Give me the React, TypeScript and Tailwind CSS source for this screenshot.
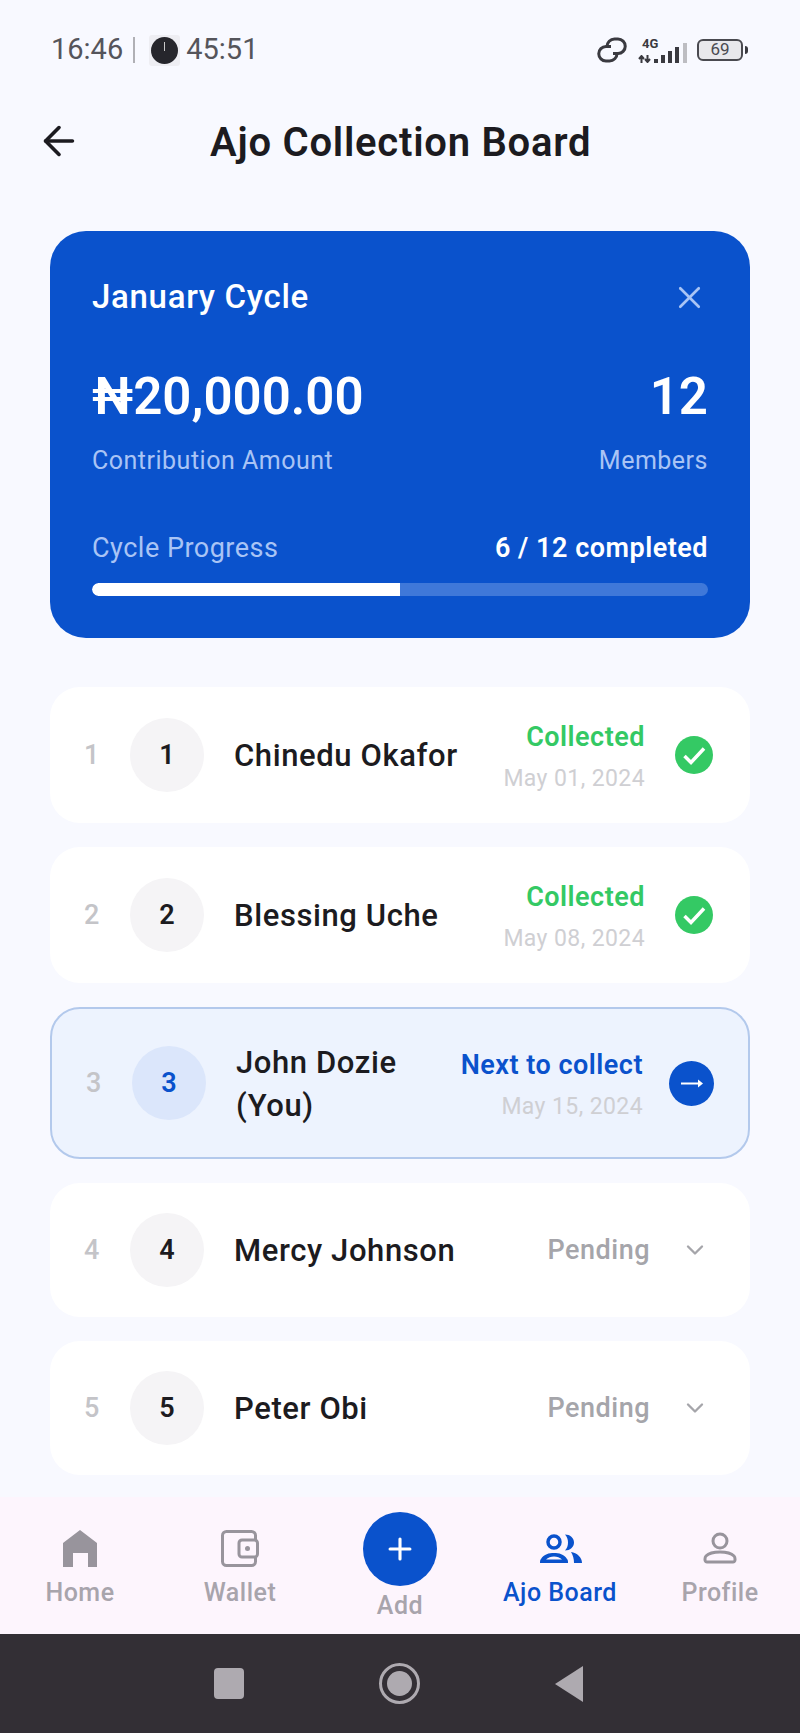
import { ReactNode } from "react";
import { ArrowLeft, ChevronDown, Plus, X } from "lucide-react";

const font = "font-['Roboto',sans-serif]";

function CheckIcon() {
  return (
    <svg width="38" height="38" viewBox="0 0 38 38">
      <circle cx="19" cy="19" r="19" fill="#34c964" />
      <path d="M9.5 20l6.5 6.5L29 12.5" fill="none" stroke="white" strokeWidth="3.5" />
    </svg>
  );
}

function ArrowIcon() {
  return (
    <svg width="45" height="45" viewBox="0 0 45 45">
      <circle cx="22.5" cy="22.5" r="22.5" fill="#0a52cc" />
      <path d="M12 22.5h20" stroke="white" strokeWidth="2" />
      <path d="M29 18.5l5 4-5 4z" fill="white" />
    </svg>
  );
}

function Avatar({ n, active }: { n: number; active?: boolean }) {
  return (
    <div className={`w-[74px] h-[74px] rounded-full flex items-center justify-center text-[27px] font-semibold ${active ? "bg-[#dbe6fb] text-[#0a52cc]" : "bg-[#f5f4f6] text-[#1c1b20]"}`}>
      {n}
    </div>
  );
}

function CollectedRow({ n, name, date }: { n: number; name: string; date: string }) {
  return (
    <div className="h-[136px] rounded-[30px] bg-white flex items-center pl-[34px] pr-[37px]">
      <span className="w-[46px] text-[27px] font-medium text-[#c4c4c8]">{n}</span>
      <Avatar n={n} />
      <span className="ml-[30px] mt-[3px] flex-1 text-[31px] tracking-[0.6px] font-medium text-[#1c1b20]">{name}</span>
      <div className="flex flex-col items-end mr-[30px] mt-[6px]">
        <span className="text-[27px] tracking-[0.5px] font-semibold text-[#34c964] leading-[36px]">Collected</span>
        <span className="text-[23px] tracking-[0.4px] text-[#cfcfd3] leading-[36px] mt-[6px]">{date}</span>
      </div>
      <CheckIcon />
    </div>
  );
}

function PendingRow({ n, name }: { n: number; name: string }) {
  return (
    <div className="h-[134px] rounded-[30px] bg-white flex items-center pl-[34px] pr-[41px]">
      <span className="w-[46px] text-[27px] font-medium text-[#c4c4c8]">{n}</span>
      <Avatar n={n} />
      <span className="ml-[30px] mt-[2px] flex-1 text-[31px] tracking-[0.6px] font-medium text-[#1c1b20]">{name}</span>
      <span className="text-[27px] tracking-[0.5px] font-medium text-[#a5a5aa] mr-[31px]">Pending</span>
      <ChevronDown size={28} color="#a5a5aa" />
    </div>
  );
}

function NavIcon({ label, active, children }: { label: string; active?: boolean; children: ReactNode }) {
  return (
    <div className="flex flex-col items-center w-[160px] pt-[28px]">
      <div className="h-[46px] flex items-center justify-center">{children}</div>
      <span className={`mt-[6px] text-[25px] tracking-[0.5px] leading-[32px] font-medium whitespace-nowrap ${active ? "text-[#0a52cc]" : "text-[#a8a4ac]"}`}>{label}</span>
    </div>
  );
}

export default function App() {
  return (
    <div className={`w-[800px] h-[1733px] bg-[#f8f9ff] flex flex-col overflow-hidden ${font}`}>
      <div className="h-[100px] flex items-center justify-between pl-[51px] pr-[52px] text-[#55555b]">
        <div className="flex items-center text-[29px]">
          <span>16:46</span>
          <span className="w-[2px] h-[26px] bg-[#b0b0b5] ml-[10px] mr-[14px]" />
          <div className="w-[31px] h-[31px] rounded-[3px] bg-[#eeeef3] flex items-center justify-center">
            <svg width="27" height="27" viewBox="0 0 27 27">
              <circle cx="13.5" cy="13.5" r="13.5" fill="#26262c" />
              <path d="M13.5 5v9" stroke="#c8c8c8" strokeWidth="1" />
            </svg>
          </div>
          <span className="ml-[6px]">45:51</span>
        </div>
        <div className="flex items-center gap-[10px]">
          <svg width="32" height="26" viewBox="0 0 32 26" fill="none" stroke="#3a3a40" strokeWidth="3">
            <path d="M15 9.5h-5a7 7 0 0 0 0 14.5h3.500a7.500 7.500 0 0 0 7.500-7.500" />
            <path d="M17 16.500h5a7 7 0 0 0 0-14.500h-3.500a7.500 7.500 0 0 0-7.500 7.500" />
          </svg>
          <div className="flex items-end gap-[3px]">
            <div className="flex flex-col">
              <span className="text-[13px] leading-[12px] font-bold ml-[4px] text-[#3a3a40]">4G</span>
              <div className="flex items-end gap-[3px] mt-[1px]">
                <svg width="13" height="8" viewBox="0 0 13 8" fill="none" stroke="#3a3a40" strokeWidth="2">
                  <path d="M3.5 8V2M1 4l2.5-3L6 4" />
                  <path d="M9.5 0v6M7 4l2.5 3L12 4" />
                </svg>
                <span className="w-[4px] h-[4px] bg-[#3a3a40]" />
                <span className="w-[4px] h-[8px] bg-[#3a3a40]" />
                <span className="w-[4px] h-[12px] bg-[#3a3a40]" />
              </div>
            </div>
            <span className="w-[4px] h-[16px] bg-[#3a3a40]" />
            <span className="w-[4px] h-[20px] bg-[#bdbdc2] ml-[1px]" />
          </div>
          <div className="flex items-center">
            <div className="w-[46px] h-[22px] rounded-[6px] border-2 border-[#4a4a50] flex items-center justify-center text-[17px] text-[#4a4a50] bg-[#e8e8ec]">69</div>
            <span className="w-[3px] h-[8px] bg-[#3a3a40] ml-[2px] rounded-r" />
          </div>
        </div>
      </div>

      <div className="h-[82px] flex items-center">
        <ArrowLeft size={46} strokeWidth={1.9} color="#1c1b20" className="ml-[36px]" />
        <span className="ml-[128px] mt-[4px] text-[40px] tracking-[0.75px] font-semibold text-[#1c1b20]">Ajo Collection Board</span>
      </div>

      <div className="mt-[49px] mx-[50px] h-[407px] rounded-[36px] bg-[#0a52cc] px-[42px] pt-[46px] flex flex-col">
        <div className="flex items-center justify-between">
          <span className="text-[33px] tracking-[0.7px] font-medium text-white leading-[40px]">January Cycle</span>
          <X size={37} color="#a9c4f5" strokeWidth={1.7} />
        </div>
        <div className="flex justify-between mt-[50px]">
          <div className="flex flex-col">
            <span className="text-[51px] font-semibold text-white leading-[60px]">₦20,000.00</span>
            <span className="text-[25px] tracking-[0.5px] text-[#a9c4f5] leading-[32px] mt-[18px]">Contribution Amount</span>
          </div>
          <div className="flex flex-col items-end">
            <span className="text-[51px] font-semibold text-white leading-[60px]">12</span>
            <span className="text-[25px] tracking-[0.5px] text-[#a9c4f5] leading-[32px] mt-[18px]">Members</span>
          </div>
        </div>
        <div className="flex justify-between items-center mt-[53px]">
          <span className="text-[27px] tracking-[0.5px] text-[#a9c4f5] leading-[36px]">Cycle Progress</span>
          <span className="text-[27px] tracking-[0.5px] font-semibold text-white leading-[36px]">6 / 12 completed</span>
        </div>
        <div className="mt-[17px] h-[13px] rounded-full bg-[#3f78d9] overflow-hidden">
          <div className="h-full w-1/2 bg-white rounded-l-full" />
        </div>
      </div>

      <div className="mt-[49px] mx-[50px] flex flex-col gap-[24px]">
        <CollectedRow n={1} name="Chinedu Okafor" date="May 01, 2024" />
        <CollectedRow n={2} name="Blessing Uche" date="May 08, 2024" />
        <div className="h-[152px] rounded-[30px] bg-[#edf3fe] border-2 border-[#b3c9ec] flex items-center pl-[34px] pr-[34px]">
          <span className="w-[46px] text-[27px] font-medium text-[#c4c4c8]">3</span>
          <Avatar n={3} active />
          <span className="ml-[30px] mt-[2px] w-[180px] text-[31px] tracking-[0.6px] leading-[43px] font-medium text-[#1c1b20]">John Dozie (You)</span>
          <div className="flex flex-col items-end flex-1 mr-[26px] mt-[5px]">
            <span className="text-[27px] tracking-[0.5px] font-semibold text-[#0a52cc] leading-[36px] whitespace-nowrap">Next to collect</span>
            <span className="text-[23px] tracking-[0.4px] text-[#cfcfd3] leading-[36px] mt-[6px]">May 15, 2024</span>
          </div>
          <ArrowIcon />
        </div>
        <PendingRow n={4} name="Mercy Johnson" />
        <PendingRow n={5} name="Peter Obi" />
      </div>

      <div className="mt-[22px] h-[137px] bg-[#fdf5fd] flex justify-center">
        <NavIcon label="Home">
          <svg width="34" height="37" viewBox="0 0 34 37" fill="#98949c">
            <path d="M17 0L34 13v24H25V23H10v14H0V13z" />
          </svg>
        </NavIcon>
        <NavIcon label="Wallet">
          <svg width="38" height="37" viewBox="0 0 38 37" fill="none" stroke="#98949c" strokeWidth="3">
            <rect x="1.5" y="1.5" width="33" height="34" rx="4" />
            <rect x="18" y="10" width="18.5" height="17" rx="3" fill="#fdf5fd" />
            <circle cx="26.5" cy="18.5" r="2.5" fill="#98949c" stroke="none" />
          </svg>
        </NavIcon>
        <div className="flex flex-col items-center w-[160px] pt-[15px]">
          <div className="w-[74px] h-[74px] rounded-full bg-[#0a52cc] flex items-center justify-center">
            <Plus size={34} color="white" strokeWidth={2.2} />
          </div>
          <span className="mt-[4px] text-[25px] tracking-[0.5px] leading-[32px] font-medium text-[#a8a4ac]">Add</span>
        </div>
        <NavIcon label="Ajo Board" active>
          <svg width="43" height="30" viewBox="0 0 43 30">
            <circle cx="15" cy="9" r="6" fill="none" stroke="#0a52cc" strokeWidth="3.5" />
            <path d="M26 1.5c5 0 9 3.5 9 8s-4 8-9 8c2-2 3-5 3-8s-1-6-3-8z" fill="#0a52cc" />
            <path fillRule="evenodd" d="M1 30c0-2 0-3 1-4 3-5 8-6 13-6s10 1 13 6c1 1 1 2 1 4zM7 26.5h16c-2-2-5-3-8-3s-6 1-8 3z" fill="#0a52cc" />
            <path d="M32 19c6 1 11 5 11 11h-8c0-4-1-8-3-11z" fill="#0a52cc" />
          </svg>
        </NavIcon>
        <NavIcon label="Profile">
          <svg width="34" height="32" viewBox="0 0 34 32" fill="none" stroke="#98949c" strokeWidth="3">
            <circle cx="17" cy="9" r="7" />
            <path d="M2 27c0-1 0-2 1-3 3-3 8-4 14-4s11 1 14 4c1 1 1 2 1 3v1c0 1-1 2-2 2H4c-1 0-2-1-2-2z" />
          </svg>
        </NavIcon>
      </div>

      <div className="flex-1 bg-[#332f35] flex items-center justify-center gap-[135px] pr-[3px]">
        <div className="w-[30px] h-[31px] rounded-[4px] bg-[#aeaab0]" />
        <div className="w-[41px] h-[41px] rounded-full border-[3px] border-[#aeaab0] flex items-center justify-center">
          <div className="w-[25px] h-[25px] rounded-full bg-[#aeaab0]" />
        </div>
        <svg width="28" height="36" viewBox="0 0 28 36"><path d="M28 0v36L0 18z" fill="#aeaab0" /></svg>
      </div>
    </div>
  );
}
